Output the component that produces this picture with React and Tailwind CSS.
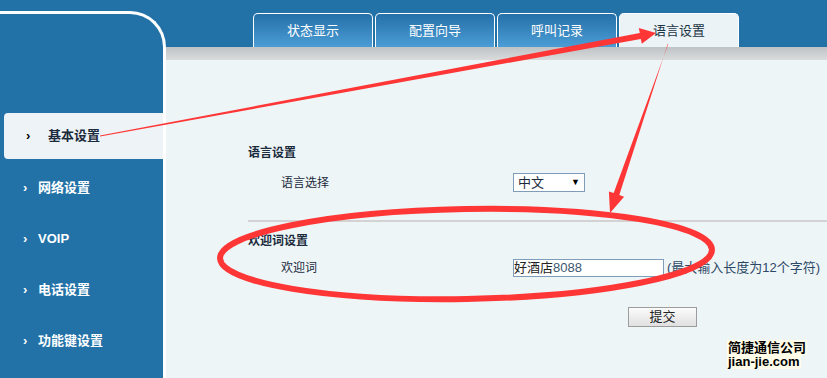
import React from 'react';

const font = { fontFamily: '"Liberation Sans", "Noto Sans CJK SC", sans-serif' };

const tabs = [
    { label: '状态显示', active: false },
    { label: '配置向导', active: false },
    { label: '呼叫记录', active: false },
    { label: '语言设置', active: true },
];

const menu = ['网络设置', 'VOIP', '电话设置', '功能键设置'];

const Annotations = () => (
    <svg className="absolute inset-0 pointer-events-none" width="827" height="378" viewBox="0 0 827 378">
        {/* arrow to the tab */}
        <polygon
            fill="#ff3636"
            points="100,135.6 639.8,33 638.8,28 656,33 641.8,43.8 640.8,38.9 100,136.6"
        />
        {/* arrow down to the welcome section */}
        <polygon
            fill="#ff3636"
            points="667.7,43.9 619.3,195.1 624.1,196.7 610,213 608.9,191.5 613.7,193.1 668.3,44.1"
        />
        <ellipse
            cx="466"
            cy="254"
            rx="246"
            ry="45"
            fill="none"
            stroke="#ff3636"
            strokeWidth="6"
            transform="rotate(-1 466 254)"
        />
    </svg>
);

const App = () => {
    return (
        <div className="relative w-[827px] h-[378px] overflow-hidden bg-[#2272a8] flex text-[12px]" style={font}>
            {/* sidebar */}
            <div className="w-[166px] shrink-0 pt-[11px]">
                <div className="h-full border-t-[3px] border-r-[3px] border-white rounded-tr-[36px] pt-[99px]">
                    <div className="ml-[4px] h-[46px] bg-[#eef3f7] rounded-l-[4px] flex items-center text-[#1b2b3c] font-bold text-[13px]">
                        <span className="ml-[22px] w-[22px] text-black">›</span>
                        <span>基本设置</span>
                    </div>
                    <div className="mt-[3px]">
                        {menu.map((item) => (
                            <div key={item} className="h-[51px] flex items-center text-white font-bold text-[13px]">
                                <span className="ml-[23px] w-[15px]">›</span>
                                <span>{item}</span>
                            </div>
                        ))}
                    </div>
                </div>
            </div>

            {/* main */}
            <div className="flex-1 flex flex-col">
                <div className="h-[47px] flex items-end pl-[87px] gap-[2px]">
                    {tabs.map((tab) => (
                        <div
                            key={tab.label}
                            className={
                                tab.active
                                    ? 'w-[120px] h-[34px] rounded-t-[5px] border border-b-0 border-white bg-[#ebf3f6] text-[#1c3445] flex items-center justify-center text-[13px]'
                                    : 'w-[120px] h-[34px] rounded-t-[5px] border border-b-0 border-white bg-gradient-to-b from-[#2570a8] to-[#4b9dd6] text-white flex items-center justify-center text-[13px]'
                            }
                        >
                            {tab.label}
                        </div>
                    ))}
                </div>
                <div className="h-[13px] bg-gradient-to-b from-[#bfc3c6] to-[#d9dbdc]" />
                <div className="flex-1 bg-[#eef5f7] pt-[85px] text-[#1b2b3c]">
                    <div className="pl-[82px] h-[16px] flex items-center font-bold">语言设置</div>
                    <div className="pl-[82px] mt-[12px] h-[19px] flex items-center">
                        <span className="ml-[33px] w-[232px]">语言选择</span>
                        <div className="w-[72px] h-[19px] bg-white border border-[#7f9db9] flex items-center justify-between px-[4px] text-[13px]">
                            <span>中文</span>
                            <span className="text-[9px] text-black">▼</span>
                        </div>
                    </div>
                    <div className="ml-[82px] mt-[28px] h-[2px] bg-[#d3d3d3]" />
                    <div className="pl-[82px] mt-[11px] h-[16px] flex items-center font-bold">欢迎词设置</div>
                    <div className="pl-[82px] mt-[10px] h-[18px] flex items-center">
                        <span className="ml-[33px] w-[232px]">欢迎词</span>
                        <div className="w-[151px] h-[18px] bg-white border border-[#7f9db9] flex items-center text-[13px]">
                            <span className="text-[#222]">好酒店</span>
                            <span className="text-[#3b5570]">8088</span>
                        </div>
                        <span className="ml-[3px] text-[#2c4866] text-[13px]">(最大输入长度为12个字符)</span>
                    </div>
                    <div className="mt-[30px] pl-[462px]">
                        <button className="w-[69px] h-[20px] border border-[#9c9c9c] bg-gradient-to-b from-[#fbfbfb] to-[#e0e0e0] text-[#222] text-[13px] flex items-center justify-center">
                            提交
                        </button>
                    </div>
                    <div className="mt-[13px] pl-[561px] flex flex-col items-start font-bold text-black">
                        <span className="bg-[#fffde8] px-[1px] text-[13px] leading-[15px]">简捷通信公司</span>
                        <span className="bg-[#fffde8] px-[1px] text-[13px] leading-[14px]">jian-jie.com</span>
                    </div>
                </div>
            </div>

            <Annotations />
        </div>
    );
};

export default App;
